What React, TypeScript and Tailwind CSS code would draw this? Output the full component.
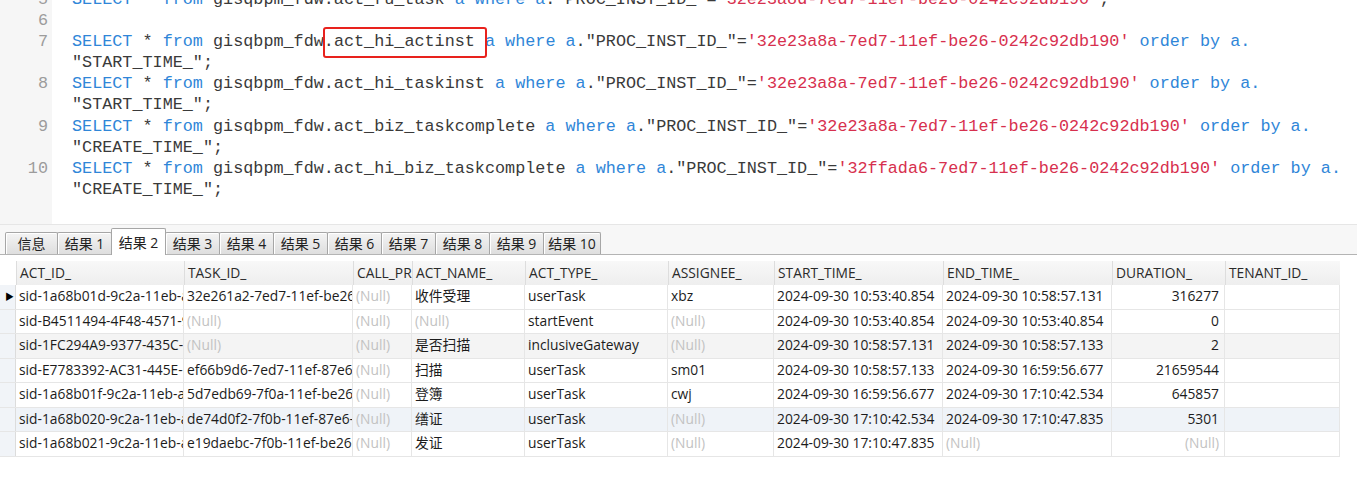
import React from "react";

type Tok = [string, "k" | "s" | "t" | "box"];

const TOK_CLASS: Record<string, string> = {
  k: "text-[#2f86d8]",
  s: "text-[#d7304e]",
  t: "text-[#3a3a3a]",
  box: "text-[#3a3a3a]",
};

function sql(table: string, id: string, end: Tok[]): Tok[] {
  return [
    ["SELECT", "k"],
    [" * ", "t"],
    ["from", "k"],
    [` gisqbpm_fdw.${table} `, "t"],
    ["a where a", "k"],
    ['."PROC_INST_ID_"=', "t"],
    [`'${id}'`, "s"],
    ...end,
  ];
}

const ORDER: Tok[] = [
  [" ", "t"],
  ["order by a.", "k"],
];

// visual lines of the editor (wrapped lines carry no number)
const LINES: { n: string; toks: Tok[] }[] = [
  { n: "5", toks: sql("act_ru_task", "32e23a8d-7ed7-11ef-be26-0242c92db190", [[";", "t"]]) },
  { n: "6", toks: [] },
  {
    n: "7",
    toks: [
      ["SELECT", "k"],
      [" * ", "t"],
      ["from", "k"],
      [" gisqbpm_fdw", "t"],
      [".act_hi_actinst ", "box"],
      ["a where a", "k"],
      ['."PROC_INST_ID_"=', "t"],
      ["'32e23a8a-7ed7-11ef-be26-0242c92db190'", "s"],
      ...ORDER,
    ],
  },
  { n: "", toks: [['"START_TIME_";', "t"]] },
  { n: "8", toks: sql("act_hi_taskinst", "32e23a8a-7ed7-11ef-be26-0242c92db190", ORDER) },
  { n: "", toks: [['"START_TIME_";', "t"]] },
  { n: "9", toks: sql("act_biz_taskcomplete", "32e23a8a-7ed7-11ef-be26-0242c92db190", ORDER) },
  { n: "", toks: [['"CREATE_TIME_";', "t"]] },
  { n: "10", toks: sql("act_hi_biz_taskcomplete", "32ffada6-7ed7-11ef-be26-0242c92db190", ORDER) },
  { n: "", toks: [['"CREATE_TIME_";', "t"]] },
  { n: "", toks: [] },
  { n: "11", toks: [] },
];

const TABS = ["信息", "结果 1", "结果 2", "结果 3", "结果 4", "结果 5", "结果 6", "结果 7", "结果 8", "结果 9", "结果 10"];

const COLS = [
  { name: "ACT_ID_" },
  { name: "TASK_ID_" },
  { name: "CALL_PROC_INST_ID_" },
  { name: "ACT_NAME_" },
  { name: "ACT_TYPE_" },
  { name: "ASSIGNEE_" },
  { name: "START_TIME_" },
  { name: "END_TIME_" },
  { name: "DURATION_", right: true },
  { name: "TENANT_ID_" },
];

const N = null;
const ROWS: (string | null)[][] = [
  ["sid-1a68b01d-9c2a-11eb-a5c1-00163e0e3c1f", "32e261a2-7ed7-11ef-be26-0242c92db190", N, "收件受理", "userTask", "xbz", "2024-09-30 10:53:40.854", "2024-09-30 10:58:57.131", "316277", ""],
  ["sid-B4511494-4F48-4571-9D0A-6A3C21F8E0B2", N, N, N, "startEvent", N, "2024-09-30 10:53:40.854", "2024-09-30 10:53:40.854", "0", ""],
  ["sid-1FC294A9-9377-435C-8E41-27B0D5C1A6F3", N, N, "是否扫描", "inclusiveGateway", N, "2024-09-30 10:58:57.131", "2024-09-30 10:58:57.133", "2", ""],
  ["sid-E7783392-AC31-445E-B7D2-93F1C0A4E5D6", "ef66b9d6-7ed7-11ef-87e6-0242c92db190", N, "扫描", "userTask", "sm01", "2024-09-30 10:58:57.133", "2024-09-30 16:59:56.677", "21659544", ""],
  ["sid-1a68b01f-9c2a-11eb-a5c1-00163e0e3c1f", "5d7edb69-7f0a-11ef-be26-0242c92db190", N, "登簿", "userTask", "cwj", "2024-09-30 16:59:56.677", "2024-09-30 17:10:42.534", "645857", ""],
  ["sid-1a68b020-9c2a-11eb-a5c1-00163e0e3c1f", "de74d0f2-7f0b-11ef-87e6-0242c92db190", N, "缮证", "userTask", N, "2024-09-30 17:10:42.534", "2024-09-30 17:10:47.835", "5301", ""],
  ["sid-1a68b021-9c2a-11eb-a5c1-00163e0e3c1f", "e19daebc-7f0b-11ef-be26-0242c92db190", N, "发证", "userTask", N, "2024-09-30 17:10:47.835", N, N, ""],
];

const ROW_BG = ["bg-white", "bg-white", "bg-[#f4f4f4]", "bg-white", "bg-white", "bg-[#eff3f8]", "bg-white"];

const GRID = "grid grid-cols-[16px_168px_169px_59px_113px_143px_106px_169px_169px_113px_115px] w-[1340px]";

export default function App() {
  return (
    <div className="w-[1357px] h-[495px] bg-white overflow-hidden flex flex-col font-['Open_Sans','Noto_Sans_CJK_SC',sans-serif]">
      {/* SQL editor */}
      <div className="h-[225px] shrink-0 flex overflow-hidden border-b border-[#e6e6e6]">
        <div className="w-[52px] shrink-0 bg-[#f6f6f6]" />
        <div className="flex-1" />
      </div>
      <div className="h-[225px] -mt-[225px] shrink-0 overflow-hidden font-['Liberation_Mono',monospace] text-[16.8px]">
        <div className="-mt-[11px]">
          {LINES.map((l, i) => (
            <div key={i} className="flex h-[21.1px] leading-[21.1px]">
              <div className="w-[48px] shrink-0 text-right text-[#9c9c9c]">{l.n}</div>
              <div className="pl-[24px] whitespace-pre">
                {l.toks.map(([txt, kind], j) =>
                  kind === "box" ? (
                    <span key={j} className="relative text-[#3a3a3a]">
                      {txt}
                      <span className="absolute -left-[1px] -right-[2px] -top-[5px] -bottom-[7px] border-2 border-[#e8221d] rounded-[3px]" />
                    </span>
                  ) : (
                    <span key={j} className={TOK_CLASS[kind]}>
                      {txt}
                    </span>
                  )
                )}
              </div>
            </div>
          ))}
        </div>
      </div>

      {/* result tabs */}
      <div className="h-[30px] shrink-0 bg-[#f7f7f7] border-b border-[#b4b4b4] flex items-end pl-[6px] text-[14px] text-[#222]">
        {TABS.map((t, i) =>
          i === 2 ? (
            <div
              key={t}
              className="w-[55px] h-[27px] -mb-px -ml-px relative z-10 bg-white border border-b-0 border-[#a6a6a6] rounded-t-[2px] flex items-center justify-center"
            >
              {t}
            </div>
          ) : (
            <div
              key={t}
              className={`${i === 0 ? "w-[53px]" : i === 10 ? "w-[58px]" : "w-[55px]"} h-[22px] -ml-px bg-gradient-to-b from-[#f4f4f4] to-[#dedede] border border-b-0 border-[#a6a6a6] rounded-t-[2px] flex items-center justify-center shadow-[inset_1px_1px_0_#ffffff]`}
            >
              {t}
            </div>
          )
        )}
      </div>

      {/* result grid */}
      <div className="mt-[6px] text-[13.8px] text-[#1c1c1c]">
        <div className={`${GRID} h-[24px] bg-gradient-to-b from-[#f8f8f8] to-[#eeeeee]`}>
          <div className="bg-white" />
          {COLS.map((c) => (
            <div key={c.name} className="border-l border-[#dddddd] pl-[3px] overflow-hidden whitespace-nowrap flex items-center text-[#2a2a2a]">
              {c.name}
            </div>
          ))}
        </div>
        {ROWS.map((r, ri) => (
          <div key={ri} className={`${GRID} h-[24.5px] border-b border-[#e6e6e6] ${ROW_BG[ri]}`}>
            <div className="bg-[#f1f4f8] border-r border-[#dcdcdc] flex items-center pl-[5px]">
              {ri === 0 && <span className="text-[9px] leading-none text-black">▶</span>}
            </div>
            {r.map((v, ci) => (
              <div
                key={ci}
                className={`border-r border-[#e6e6e6] overflow-hidden whitespace-nowrap flex items-center ${
                  COLS[ci].right ? "justify-end pr-[5px]" : "pl-[3px]"
                } ${v === null ? "text-[#c2c2c2]" : ""}`}
              >
                {v === null ? "(Null)" : v}
              </div>
            ))}
          </div>
        ))}
      </div>
    </div>
  );
}
